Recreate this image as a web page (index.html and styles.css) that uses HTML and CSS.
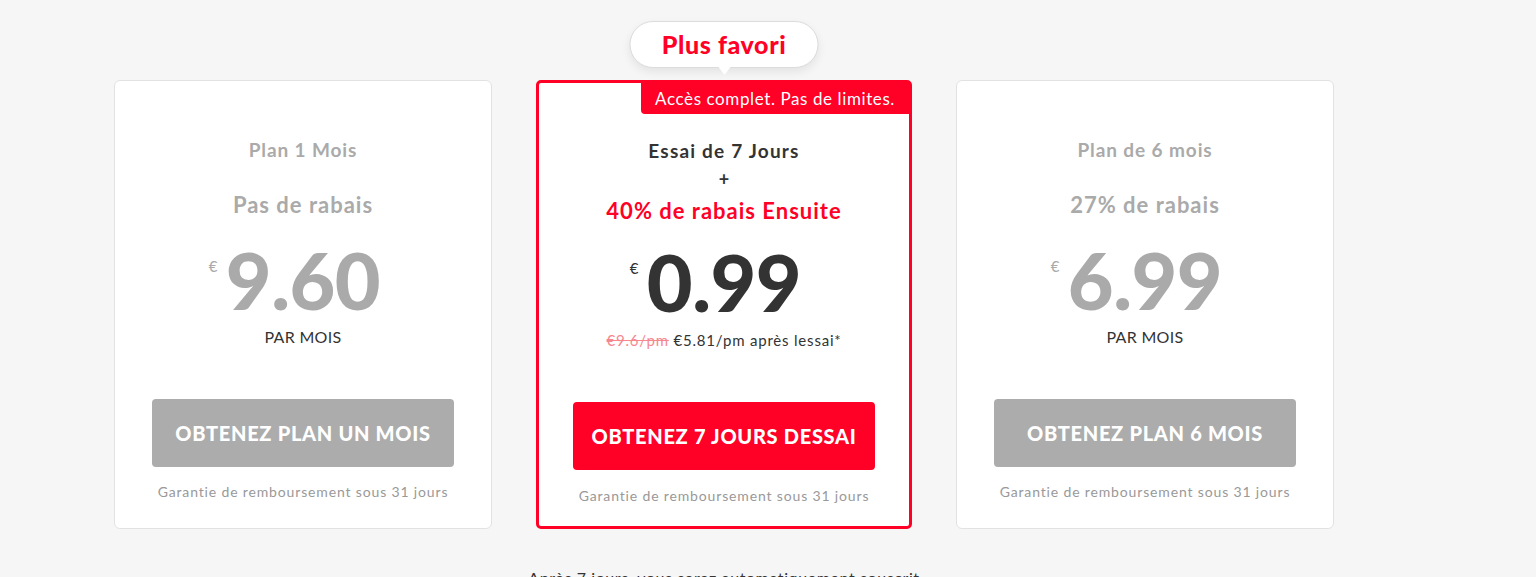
FILE: index.html
```html
<!DOCTYPE html>
<html lang="fr">
<head>
<meta charset="utf-8">
<title>Plans</title>
<link rel="stylesheet" href="styles.css">
</head>
<body>
<main class="page">
  <section class="plans">
    <article class="card">
      <h3 class="plan-name">Plan 1 Mois</h3>
      <p class="discount">Pas de rabais</p>
      <div class="price"><span class="cur">€</span><span class="amount">9.60</span></div>
      <p class="per">PAR MOIS</p>
      <a class="btn" href="#">OBTENEZ PLAN UN MOIS</a>
      <p class="guarantee">Garantie de remboursement sous 31 jours</p>
    </article>

    <article class="card card-featured">
      <div class="bubble">Plus favori</div>
      <div class="ribbon">Accès complet. Pas de limites.</div>
      <h3 class="trial">Essai de 7 Jours</h3>
      <p class="plus">+</p>
      <p class="trial-discount">40% de rabais Ensuite</p>
      <div class="price"><span class="cur">€</span><span class="amount">0.99</span></div>
      <p class="after"><s class="old">€9.6/pm</s> €5.81/pm après lessai*</p>
      <a class="btn btn-red" href="#">OBTENEZ 7 JOURS DESSAI</a>
      <p class="guarantee">Garantie de remboursement sous 31 jours</p>
    </article>

    <article class="card">
      <h3 class="plan-name">Plan de 6 mois</h3>
      <p class="discount">27% de rabais</p>
      <div class="price"><span class="cur">€</span><span class="amount">6.99</span></div>
      <p class="per">PAR MOIS</p>
      <a class="btn" href="#">OBTENEZ PLAN 6 MOIS</a>
      <p class="guarantee">Garantie de remboursement sous 31 jours</p>
    </article>
  </section>
  <p class="note">Après 7 jours, vous serez automatiquement souscrit</p>
</main>
</body>
</html>
```

FILE: styles.css
```css
* { box-sizing: border-box; }

html, body {
  margin: 0;
  padding: 0;
  background: #f6f6f6;
  font-family: Lato, "Noto Sans", "Liberation Sans", sans-serif;
  color: #333;
  overflow: hidden;
}

.page {
  width: 1220px;
  margin-left: 114px;
  padding-top: 80px;
}

.plans {
  display: flex;
  gap: 44px;
  align-items: stretch;
}

.card {
  position: relative;
  flex: 0 0 378px;
  background: #fff;
  border: 1px solid #e2e2e2;
  border-radius: 6px;
  display: flex;
  flex-direction: column;
  align-items: center;
  padding: 57px 0 21px;
  text-align: center;
}

.card p, .card h3 { margin: 0; }

.plan-name {
  font-size: 19px;
  line-height: 24px;
  font-weight: 700;
  color: #aaa;
  letter-spacing: 0.9px;
}

.discount {
  margin-top: 29px !important;
  font-size: 22px;
  line-height: 28px;
  font-weight: 700;
  color: #aaa;
  letter-spacing: 1px;
}

.price {
  position: relative;
  margin-top: 22px;
  color: #aaa;
}

.cur {
  position: absolute;
  left: -17px;
  top: 16px;
  font-size: 15px;
  line-height: 18px;
  font-weight: 400;
}

.amount {
  display: block;
  font-size: 79px;
  line-height: 78px;
  font-weight: 900;
  letter-spacing: -0.5px;
}

.per {
  margin-top: 8px !important;
  font-size: 16px;
  line-height: 20px;
  color: #333;
  letter-spacing: 0.3px;
}

.btn {
  display: flex;
  align-items: center;
  justify-content: center;
  width: 302px;
  height: 68px;
  margin-top: 52px;
  background: #acacac;
  border-radius: 4px;
  color: #fff;
  font-size: 20px;
  font-weight: 900;
  text-decoration: none;
  letter-spacing: 0.7px;
}

.guarantee {
  margin-top: 16px !important;
  font-size: 14px;
  line-height: 18px;
  color: #999;
  letter-spacing: 0.85px;
}

/* featured */
.card-featured {
  flex-basis: 376px;
  border: 3px solid #ff0026;
  border-radius: 5px;
  padding-top: 54px;
}

.card-featured .price { color: #333; margin-top: 18px; }
.card-featured .btn { margin-top: 52px; }

.bubble {
  position: absolute;
  top: -62px;
  left: 50%;
  transform: translateX(-50%);
  width: 189px;
  height: 47px;
  background: #fff;
  border: 1px solid #dcdcdc;
  border-radius: 24px;
  box-shadow: 0 4px 10px rgba(0, 0, 0, 0.08);
  color: #ff0026;
  font-size: 25px;
  font-weight: 900;
  line-height: 45px;
  text-align: center;
  letter-spacing: 0.6px;
}

.bubble::after {
  content: "";
  position: absolute;
  left: 50%;
  bottom: -8px;
  margin-left: -6px;
  border-left: 6px solid transparent;
  border-right: 6px solid transparent;
  border-top: 8px solid #fff;
}

.ribbon {
  position: absolute;
  top: 0;
  right: 0;
  width: 268px;
  height: 31px;
  background: #ff0026;
  color: #fff;
  border-bottom-left-radius: 4px;
  font-size: 17px;
  line-height: 31px;
  text-align: center;
  letter-spacing: 0.6px;
}

.trial {
  font-size: 19px;
  line-height: 28px;
  font-weight: 700;
  color: #333;
  letter-spacing: 1.2px;
}

.plus {
  font-size: 18px;
  line-height: 28px;
  font-weight: 700;
  color: #333;
}

.trial-discount {
  margin-top: 4px !important;
  font-size: 22px;
  line-height: 28px;
  font-weight: 700;
  color: #ff0026;
  letter-spacing: 1px;
}

.after {
  margin-top: 9px !important;
  font-size: 15px;
  line-height: 20px;
  color: #333;
  letter-spacing: 0.8px;
}

.old {
  color: #f7878f;
  text-decoration: line-through;
}

.btn-red {
  background: #ff0026;
}

.card-featured .guarantee { margin-top: 17px !important; }

.note {
  margin: 39px 0 0;
  text-align: center;
  font-size: 16px;
  line-height: 20px;
  color: #333;
  letter-spacing: 0.6px;
}
```
